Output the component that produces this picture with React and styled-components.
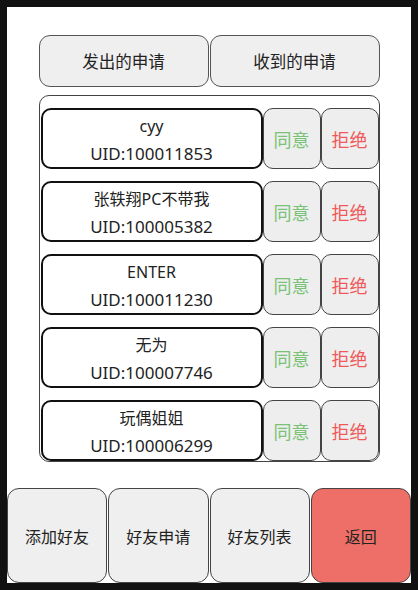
import styled, { createGlobalStyle } from "styled-components";

const GlobalStyle = createGlobalStyle`
  html, body {
    margin: 0;
    padding: 0;
    background: #111111;
  }
  body {
    font-family: "Noto Sans", "Noto Sans CJK SC", sans-serif;
  }
`;

const requests = [
  { id: 1, name: "cyy", uid: "100011853" },
  { id: 2, name: "张轶翔PC不带我", uid: "100005382" },
  { id: 3, name: "ENTER", uid: "100011230" },
  { id: 4, name: "无为", uid: "100007746" },
  { id: 5, name: "玩偶姐姐", uid: "100006299" },
];

const App = () => {
  return (
    <>
      <GlobalStyle />
      <Screen>
        <Page>
          <Tabs>
            <TabButton>发出的申请</TabButton>
            <TabButton>收到的申请</TabButton>
          </Tabs>

          {/* request list */}
          <List>
            {requests.map(({ id, name, uid }) => (
              <Row key={id}>
                <NameCard>
                  <Name>{name}</Name>
                  <Uid>UID:{uid}</Uid>
                </NameCard>
                <ActionButton $tone="accept">同意</ActionButton>
                <ActionButton $tone="reject">拒绝</ActionButton>
              </Row>
            ))}
          </List>

          {/* bottom nav */}
          <NavBar>
            <NavButton>添加好友</NavButton>
            <NavButton>好友申请</NavButton>
            <NavButton>好友列表</NavButton>
            <NavButton $danger>返回</NavButton>
          </NavBar>
        </Page>
      </Screen>
    </>
  );
};

const Screen = styled.div`
  width: 418px;
  height: 590px;
  padding: 7px;
  box-sizing: border-box;
  background: #111111;
`;

const Page = styled.div`
  width: 404px;
  height: 576px;
  background: #ffffff;
  display: flex;
  flex-direction: column;
  align-items: center;
`;

const Tabs = styled.div`
  display: flex;
  gap: 1px;
  margin-top: 28px;
  width: 341px;
`;

const TabButton = styled.div`
  flex: 1;
  height: 52px;
  box-sizing: border-box;
  border: 1.5px solid #555555;
  border-radius: 11px;
  background: #efefef;
  display: flex;
  align-items: center;
  justify-content: center;
  font-size: 16.5px;
  color: #222222;
`;

const List = styled.div`
  margin-top: 8px;
  width: 341px;
  height: 367px;
  box-sizing: border-box;
  border: 1px solid #444444;
  border-radius: 10px;
  overflow: hidden;
  display: flex;
  flex-direction: column;
  gap: 12px;
  padding: 12px 0 0 1px;
`;

const Row = styled.div`
  display: flex;
  flex-shrink: 0;
  height: 61px;
  width: 338px;
`;

const NameCard = styled.div`
  width: 222px;
  box-sizing: border-box;
  border: 2px solid #111111;
  border-radius: 10px;
  background: #ffffff;
  display: flex;
  flex-direction: column;
  align-items: center;
  justify-content: center;
  gap: 4px;
  padding-top: 3px;
  color: #222222;
`;

const Name = styled.span`
  font-size: 16px;
  line-height: 24px;
`;

const Uid = styled.span`
  font-size: 17px;
  line-height: 24px;
`;

const ActionButton = styled.div`
  flex: 1;
  box-sizing: border-box;
  border: 1.5px solid #444444;
  border-radius: 10px;
  background: #eeeeee;
  display: flex;
  align-items: center;
  justify-content: center;
  font-size: 18px;
  color: ${({ $tone }) => ($tone === "accept" ? "#79c276" : "#ee5a5a")};
`;

const NavBar = styled.div`
  margin-top: auto;
  display: flex;
  gap: 1px;
  width: 404px;
`;

const NavButton = styled.div`
  flex: 1;
  height: 95px;
  box-sizing: border-box;
  border: 1.5px solid #444444;
  border-radius: 12px;
  background: ${({ $danger }) => ($danger ? "#ee6f68" : "#efefef")};
  display: flex;
  align-items: center;
  justify-content: center;
  font-size: 16px;
  color: #222222;
`;

export default App;
